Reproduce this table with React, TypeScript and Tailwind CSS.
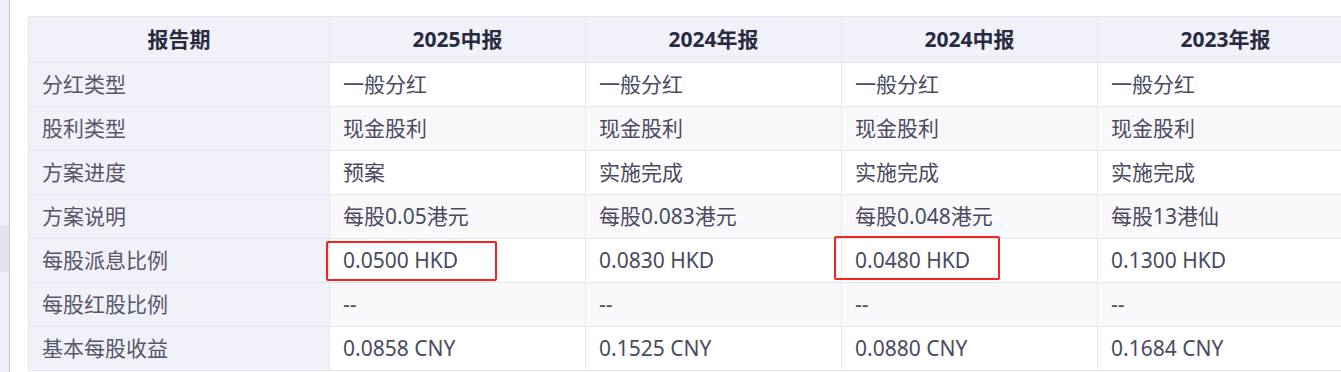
import React from 'react'

interface Row {
  label: string
  values: string[]
}

const periods = ['2025中报', '2024年报', '2024中报', '2023年报']

const rows: Row[] = [
  { label: '分红类型', values: ['一般分红', '一般分红', '一般分红', '一般分红'] },
  { label: '股利类型', values: ['现金股利', '现金股利', '现金股利', '现金股利'] },
  { label: '方案进度', values: ['预案', '实施完成', '实施完成', '实施完成'] },
  { label: '方案说明', values: ['每股0.05港元', '每股0.083港元', '每股0.048港元', '每股13港仙'] },
  { label: '每股派息比例', values: ['0.0500 HKD', '0.0830 HKD', '0.0480 HKD', '0.1300 HKD'] },
  { label: '每股红股比例', values: ['--', '--', '--', '--'] },
  { label: '基本每股收益', values: ['0.0858 CNY', '0.1525 CNY', '0.0880 CNY', '0.1684 CNY'] },
]

const font = { fontFamily: '"Noto Sans", "Noto Sans CJK SC", sans-serif' }

const App: React.FC = () => {
  return (
    <div className="flex h-[372px] w-[1341px] overflow-hidden bg-white" style={font}>
      {/* side strip */}
      <div className="flex w-[10px] shrink-0 flex-col border-r border-[#c9cad4] bg-[#eff0f5]">
        <div className="h-[225px]" />
        <div className="h-[47px] bg-[#e1e2ee]" />
      </div>

      <div className="relative ml-[18px] mt-[16px] shrink-0">
        <div className="grid grid-cols-[301px_256px_256px_256px_256px] border-t border-l border-[#e6e6f2]">
          {/* Header */}
          <div className="flex h-[46px] items-center justify-center border-r border-b border-[#e6e6f2] bg-[#f1f1fa] pt-[1px] text-[21px] font-bold text-[#2b2b40]">
            报告期
          </div>
          {periods.map((p) => (
            <div
              key={p}
              className="flex h-[46px] items-center justify-center border-r border-b border-[#e6e6f2] bg-[#f1f1fa] pt-[1px] text-[21px] font-bold text-[#2b2b40]"
            >
              {p}
            </div>
          ))}

          {/* Body */}
          {rows.map((row, i) => (
            <React.Fragment key={row.label}>
              <div className="flex h-[44px] items-center border-r border-b border-[#e6e6f2] bg-[#f1f1fa] pl-[13px] text-[21px] text-[#575769]">
                {row.label}
              </div>
              {row.values.map((v, j) => (
                <div
                  key={j}
                  className={`flex h-[44px] items-center border-r border-b border-[#e6e6f2] pl-[13px] text-[21px] text-[#4a4a60] ${
                    i % 2 === 1 ? 'bg-[#f9f9fc]' : 'bg-white'
                  }`}
                >
                  {v}
                </div>
              ))}
            </React.Fragment>
          ))}
        </div>

        {/* annotation boxes */}
        <div className="absolute left-[298px] top-[225px] h-[40px] w-[171px] rounded-[2px] border-2 border-[#f5231b]" />
        <div className="absolute left-[806px] top-[220px] h-[44px] w-[166px] rounded-[2px] border-2 border-[#f5231b]" />
      </div>
    </div>
  )
}

export default App
